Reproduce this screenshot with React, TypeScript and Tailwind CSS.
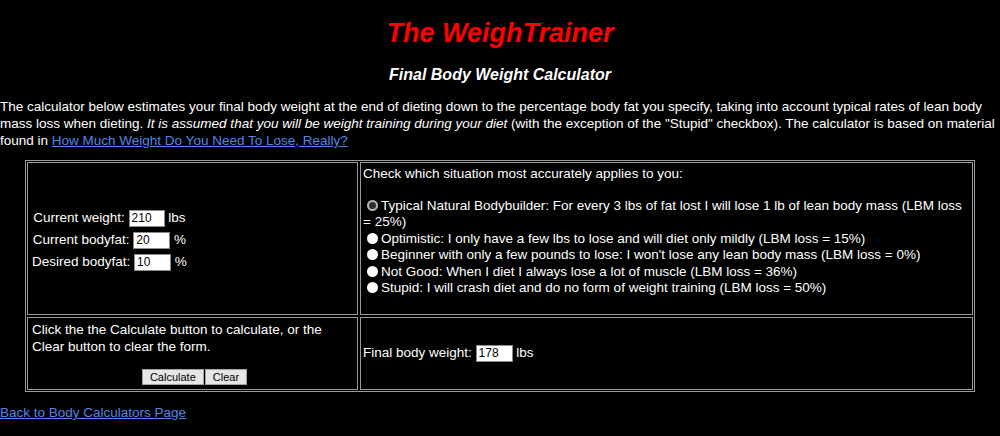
import React from "react";

const font = { fontFamily: '"Liberation Sans", Arial, sans-serif' };

function Field({ value, width = "w-[36px]" }: { value: string; width?: string }) {
  return (
    <span
      className={`inline-block ${width} h-[17px] bg-white border border-[#8a8a8a] text-black text-[12px] leading-[15px] pl-[2px] align-middle text-left`}
    >
      {value}
    </span>
  );
}

function Radio({ checked = false }: { checked?: boolean }) {
  return checked ? (
    <span className="inline-block w-[11px] h-[11px] rounded-full border-2 border-[#b8b8b8] bg-[#2e2e2e] ml-[4px] mr-[3px] align-[-1px]" />
  ) : (
    <span className="inline-block w-[11px] h-[11px] rounded-full bg-white ml-[4px] mr-[3px] align-[-1px]" />
  );
}

function Btn({ children }: { children: React.ReactNode }) {
  return (
    <span className="inline-flex items-center justify-center h-[16px] px-[7px] bg-[#e6e6e6] border border-[#a0a0a0] text-black text-[11px] leading-none">
      {children}
    </span>
  );
}

export default function App() {
  const options = [
    "Optimistic: I only have a few lbs to lose and will diet only mildly (LBM loss = 15%)",
    "Beginner with only a few pounds to lose: I won't lose any lean body mass (LBM loss = 0%)",
    "Not Good: When I diet I always lose a lot of muscle (LBM loss = 36%)",
    "Stupid: I will crash diet and do no form of weight training (LBM loss = 50%)",
  ];

  return (
    <div className="min-h-[436px] bg-black text-white text-[13.5px]" style={font}>
      <h1 className="pt-[18px] text-center text-[27px] leading-[31px] font-bold italic text-[#ff0000]">
        The WeighTrainer
      </h1>
      <h2 className="mt-[17px] text-center text-[16px] leading-[18px] font-bold italic">
        Final Body Weight Calculator
      </h2>
      <p className="mt-[14px] leading-[17px]">
        The calculator below estimates your final body weight at the end of dieting down to the percentage body fat
        you specify, taking into account typical rates of lean body mass loss when dieting.{" "}
        <i>It is assumed that you will be weight training during your diet</i> (with the exception of the "Stupid"
        checkbox). The calculator is based on material found in{" "}
        <a href="#" className="text-[#5286e6] underline">
          How Much Weight Do You Need To Lose, Really?
        </a>
      </p>

      <div className="mx-[25px] mt-[11px] border border-[#9a9a9a] p-[1px] grid grid-cols-[331px_1fr] grid-rows-[153px_73px] gap-[2px]">
        <div className="border border-[#9a9a9a] flex items-center pl-[4px] pt-[3px]">
          <div className="flex flex-col items-center gap-[4.5px] leading-[17px]">
            <div>
              Current weight: <Field value="210" /> lbs
            </div>
            <div>
              Current bodyfat: <Field value="20" width="w-[37px]" /> %
            </div>
            <div>
              Desired bodyfat: <Field value="10" width="w-[37px]" /> %
            </div>
          </div>
        </div>

        <div className="border border-[#9a9a9a] pl-[2px] pr-[4px] pt-[3px] leading-[16.5px]">
          <div>Check which situation most accurately applies to you:</div>
          <div className="mt-[15px]">
            <Radio checked />
            Typical Natural Bodybuilder: For every 3 lbs of fat lost I will lose 1 lb of lean body mass (LBM loss =
            25%)
          </div>
          {options.map((o) => (
            <div key={o}>
              <Radio />
              {o}
            </div>
          ))}
        </div>

        <div className="border border-[#9a9a9a] pl-[4px] pt-[4px] leading-[16.5px]">
          <div>
            Click the the Calculate button to calculate, or the
            <br />
            Clear button to clear the form.
          </div>
          <div className="mt-[14px] flex justify-center gap-[1px]">
            <Btn>Calculate</Btn>
            <Btn>Clear</Btn>
          </div>
        </div>

        <div className="border border-[#9a9a9a] pl-[2px] flex items-center">
          <div>
            Final body weight: <Field value="178" width="w-[37px]" /> lbs
          </div>
        </div>
      </div>

      <div className="mt-[12px] leading-[17px]">
        <a href="#" className="text-[#5286e6] underline">
          Back to Body Calculators Page
        </a>
      </div>
    </div>
  );
}
